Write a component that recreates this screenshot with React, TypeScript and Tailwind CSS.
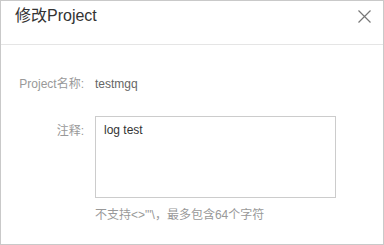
export default function App() {
  return (
    <div
      className="w-[384px] h-[245px] border border-[#c9c9c9] bg-white text-[12px]"
      style={{ fontFamily: '"Liberation Sans", Arial, "Noto Sans CJK SC", sans-serif' }}
    >
      <div className="h-[44px] border-b border-[#e5e5e5] flex items-start justify-between pl-[14px] pr-[12px] pt-[4px]">
        <h3 className="text-[16px] leading-[22px] text-[#333]">修改Project</h3>
        <button className="mt-[5px] text-[#777]">
          <svg width="13" height="13" viewBox="0 0 13 13" fill="none" stroke="currentColor" strokeWidth="1.2">
            <path d="M0.5 0.5 L12.5 12.5 M12.5 0.5 L0.5 12.5" />
          </svg>
        </button>
      </div>
      <div className="pt-[29px]">
        <div className="flex leading-[20px]">
          <label className="w-[83px] text-right text-[#999]">Project名称:</label>
          <span className="ml-[11px] text-[#666]">testmgq</span>
        </div>
        <div className="flex mt-[22px]">
          <label className="w-[83px] text-right text-[#999] leading-[20px] mt-[5px]">注释:</label>
          <div className="ml-[11px]">
            <textarea
              className="block w-[241px] h-[82px] border border-[#ccc] px-[8px] py-[4px] text-[12px] leading-[18px] text-[#333] resize-none outline-none"
              defaultValue="log test"
            />
            <p className="mt-[7px] leading-[20px] text-[#999]">不支持&lt;&gt;"'\，最多包含64个字符</p>
          </div>
        </div>
      </div>
    </div>
  )
}
